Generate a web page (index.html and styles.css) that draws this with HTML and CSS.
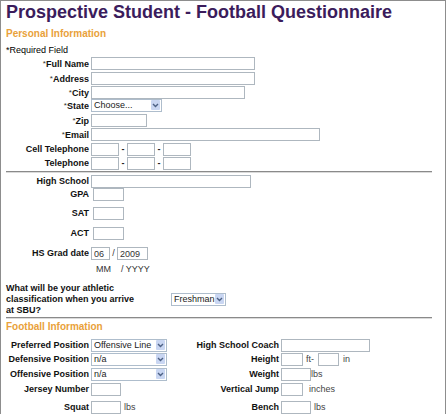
FILE: index.html
```html
<!DOCTYPE html>
<html>
<head>
<meta charset="utf-8">
<title>Prospective Student - Football Questionnaire</title>
<link rel="stylesheet" href="styles.css">
</head>
<body>
<div class="page">
  <h1 class="title">Prospective Student - Football Questionnaire</h1>
  <h2 class="section section-personal">Personal Information</h2>
  <p class="note">*Required Field</p>

  <div class="grid grid-contact">
    <label class="lbl"><span class="req">*</span>Full Name</label>
    <div class="fld"><input class="inp w-164" type="text"></div>
    <label class="lbl"><span class="req">*</span>Address</label>
    <div class="fld"><input class="inp w-164" type="text"></div>
    <label class="lbl"><span class="req">*</span>City</label>
    <div class="fld"><input class="inp w-154" type="text"></div>
    <label class="lbl"><span class="req">*</span>State</label>
    <div class="fld"><span class="sel w-71"><select><option>Choose...</option></select><span class="sel-btn"><svg viewBox="0 0 7 5" width="7" height="5"><path d="M1 1 L3.5 3.5 L6 1" fill="none" stroke="#4d6185" stroke-width="1.4"/></svg></span></span></div>
    <label class="lbl"><span class="req">*</span>Zip</label>
    <div class="fld"><input class="inp w-56" type="text"></div>
    <label class="lbl"><span class="req">*</span>Email</label>
    <div class="fld"><input class="inp w-229" type="text"></div>
    <label class="lbl">Cell Telephone</label>
    <div class="fld"><input class="inp w-28" type="text"><span class="dash">-</span><input class="inp w-28" type="text"><span class="dash">-</span><input class="inp w-28" type="text"></div>
    <label class="lbl">Telephone</label>
    <div class="fld"><input class="inp w-28" type="text"><span class="dash">-</span><input class="inp w-28" type="text"><span class="dash">-</span><input class="inp w-28" type="text"></div>
  </div>

  <hr class="rule">

  <div class="grid grid-school">
    <label class="lbl">High School</label>
    <div class="fld"><input class="inp w-160" type="text"></div>
    <label class="lbl">GPA</label>
    <div class="fld"><input class="inp w-31 shift" type="text"></div>
    <label class="lbl">SAT</label>
    <div class="fld"><input class="inp w-31 shift" type="text"></div>
    <label class="lbl">ACT</label>
    <div class="fld"><input class="inp w-31 shift" type="text"></div>
    <label class="lbl">HS Grad date</label>
    <div class="fld"><input class="inp w-19" type="text" value="06"><span class="slash">/</span><input class="inp w-31" type="text" value="2009"></div>
    <span class="lbl"></span>
    <div class="fld hint">MM&nbsp;&nbsp;&nbsp;&nbsp;/ YYYY</div>
  </div>

  <div class="classif">
    <p class="question">What will be your athletic classification when you arrive at SBU?</p>
    <span class="sel w-55"><select><option>Freshman</option></select><span class="sel-btn"><svg viewBox="0 0 7 5" width="7" height="5"><path d="M1 1 L3.5 3.5 L6 1" fill="none" stroke="#4d6185" stroke-width="1.4"/></svg></span></span>
  </div>

  <hr class="rule rule-2">

  <h2 class="section section-football">Football Information</h2>

  <div class="grid grid-football">
    <label class="lbl">Preferred Position</label>
    <div class="fld"><span class="sel w-76"><select><option>Offensive Line</option></select><span class="sel-btn"><svg viewBox="0 0 7 5" width="7" height="5"><path d="M1 1 L3.5 3.5 L6 1" fill="none" stroke="#4d6185" stroke-width="1.4"/></svg></span></span></div>
    <label class="lbl">High School Coach</label>
    <div class="fld"><input class="inp w-89" type="text"></div>

    <label class="lbl">Defensive Position</label>
    <div class="fld"><span class="sel w-76"><select><option>n/a</option></select><span class="sel-btn"><svg viewBox="0 0 7 5" width="7" height="5"><path d="M1 1 L3.5 3.5 L6 1" fill="none" stroke="#4d6185" stroke-width="1.4"/></svg></span></span></div>
    <label class="lbl">Height</label>
    <div class="fld"><input class="inp w-22" type="text"><span class="unit u-ft">ft-</span><input class="inp w-21" type="text"><span class="unit u-in">in</span></div>

    <label class="lbl">Offensive Position</label>
    <div class="fld"><span class="sel w-76"><select><option>n/a</option></select><span class="sel-btn"><svg viewBox="0 0 7 5" width="7" height="5"><path d="M1 1 L3.5 3.5 L6 1" fill="none" stroke="#4d6185" stroke-width="1.4"/></svg></span></span></div>
    <label class="lbl">Weight</label>
    <div class="fld"><input class="inp w-30" type="text"><span class="unit u-tight">lbs</span></div>

    <label class="lbl">Jersey Number</label>
    <div class="fld"><input class="inp w-30" type="text"></div>
    <label class="lbl">Vertical Jump</label>
    <div class="fld"><input class="inp w-22" type="text"><span class="unit u-inches">inches</span></div>

    <label class="lbl">Squat</label>
    <div class="fld"><input class="inp w-30" type="text"><span class="unit u-lbs">lbs</span></div>
    <label class="lbl">Bench</label>
    <div class="fld"><input class="inp w-30" type="text"><span class="unit u-lbs">lbs</span></div>
  </div>
</div>
</body>
</html>
```

FILE: styles.css
```css
* { box-sizing: border-box; }

body {
  margin: 0;
  background: #fff;
  color: #000;
  font-family: "Liberation Sans", Arial, sans-serif;
}

.page {
  width: 446px;
  height: 414px;
  border: 1px solid #8d8d8d;
  border-bottom: 0;
  padding: 0 5px;
  overflow: hidden;
}

.title {
  margin: 0;
  font-size: 18px;
  line-height: 22px;
  font-weight: bold;
  color: #3b1c5c;
}

.section {
  margin: 0;
  font-size: 10px;
  line-height: 12px;
  font-weight: bold;
  color: #e9a13a;
}
.section-personal { margin-top: 5px; }
.section-football { margin-top: 2px; }

.note {
  margin: 5px 0 0;
  font-size: 9px;
  line-height: 11px;
}

.grid {
  display: grid;
  grid-template-columns: 83px 1fr;
  column-gap: 2px;
}
.grid-contact { grid-template-rows: 15px 14px 13px 15px 14px 15px 14px 14px; }
.grid-school { grid-template-rows: 13px 19px 20px 20px 16px 14px; }
.grid-football {
  margin-top: 5px;
  grid-template-columns: 83px 100px 86px 1fr;
  grid-template-rows: 14px 15px 15px 18px 15px;
}

.lbl {
  font-size: 9px;
  line-height: 13px;
  padding-top: 1px;
  font-weight: bold;
  text-align: right;
  white-space: nowrap;
  color: #111;
}
.req { font-weight: normal; font-size: 8px; vertical-align: 1px; color: #333; }

.fld {
  display: flex;
  align-items: flex-start;
  padding-top: 1px;
  font-size: 9px;
  line-height: 13px;
}

.inp {
  display: block;
  height: 13px;
  margin: 0;
  padding: 0 2px;
  border: 1px solid #aeb7bf;
  background: #fff;
  font: 9px/11px "Liberation Sans", Arial, sans-serif;
  color: #333;
}
.shift { margin-left: 2px; }

.w-164 { width: 164px; }
.w-160 { width: 160px; }
.w-154 { width: 154px; }
.w-229 { width: 229px; }
.w-56 { width: 56px; }
.w-89 { width: 89px; }
.w-31 { width: 31px; }
.w-30 { width: 30px; }
.w-28 { width: 28px; }
.w-22 { width: 22px; }
.w-21 { width: 21px; }
.w-19 { width: 19px; }
.w-71 { width: 71px; }
.w-76 { width: 76px; }
.w-55 { width: 55px; }

.dash {
  width: 8px;
  text-align: center;
  font-weight: bold;
  color: #222;
}
.slash {
  width: 7px;
  text-align: center;
  color: #333;
}
.hint {
  padding-left: 5px;
  color: #333;
}

.unit { color: #444; }
.u-ft { margin: 0 4px 0 3px; }
.u-in { margin-left: 4px; }
.u-tight { margin-left: 0; }
.u-inches { margin-left: 6px; }
.u-lbs { margin-left: 3px; }

.sel {
  position: relative;
  display: block;
  height: 13px;
}
.sel select {
  -webkit-appearance: none;
  appearance: none;
  display: block;
  width: 100%;
  height: 13px;
  margin: 0;
  padding: 0 0 0 2px;
  border: 1px solid #aebdcc;
  border-radius: 0;
  background: #fff;
  font: 9px/11px "Liberation Sans", Arial, sans-serif;
  color: #222;
}
.sel-btn {
  position: absolute;
  top: 1px;
  right: 2px;
  width: 9px;
  height: 10px;
  display: flex;
  align-items: center;
  justify-content: center;
  background: #c9d6f2;
  border-radius: 1px;
  pointer-events: none;
}

.rule {
  width: 426px;
  height: 2px;
  margin: 1px 0 1px;
  border: 0;
  border-top: 1px solid #8a8a8a;
  border-bottom: 1px solid #dadada;
}
.rule-2 { margin-top: 1px; }

.classif {
  margin-top: 7px;
  display: flex;
  align-items: center;
}
.question {
  margin: 0 33px 0 0;
  width: 132px;
  font-size: 9px;
  line-height: 11px;
  font-weight: bold;
  color: #111;
}
```
